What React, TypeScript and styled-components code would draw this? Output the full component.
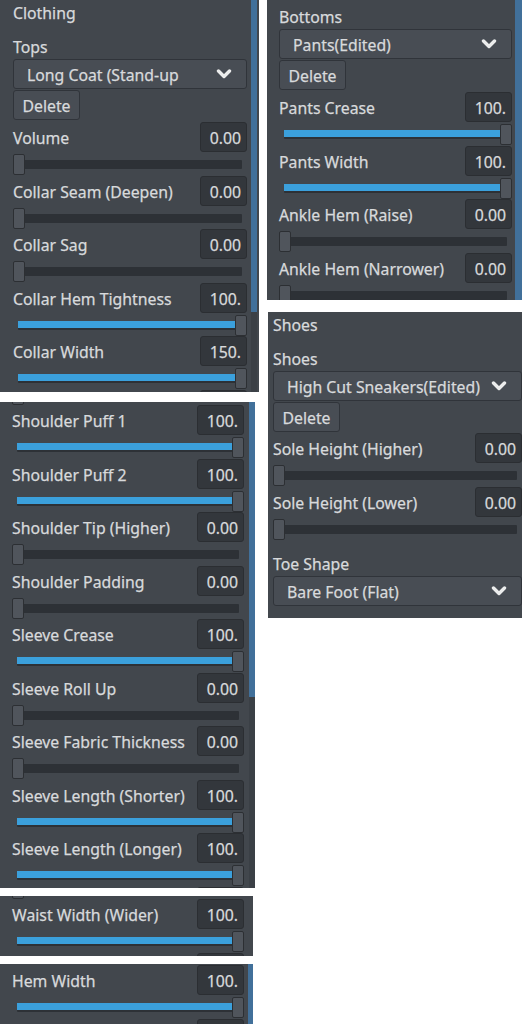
import React from 'react';
import styled, { createGlobalStyle } from 'styled-components';

const GlobalStyle = createGlobalStyle`
  html, body {
    margin: 0;
    padding: 0;
    background: #ffffff;
  }
  body {
    font-family: "Noto Sans", "DejaVu Sans", sans-serif;
    font-size: 15.8px;
    color: #d8dadc;
    -webkit-text-stroke: 0.25px #d8dadc;
  }
`;

const Collage = styled.div`
  display: flex;
  gap: 8px;
  width: 522px;
  height: 1024px;
  overflow: hidden;
`;

const Column = styled.div<{ $width: number }>`
  display: flex;
  flex-direction: column;
  width: ${({ $width }) => $width}px;
  flex: none;
`;

const Panel = styled.section<{ $w: number; $h: number; $mt?: number; $ml?: number }>`
  display: flex;
  align-items: flex-start;
  flex: none;
  width: ${({ $w }) => $w}px;
  height: ${({ $h }) => $h}px;
  margin-top: ${({ $mt }) => $mt ?? 0}px;
  margin-left: ${({ $ml }) => $ml ?? 0}px;
  background: #42474d;
  overflow: hidden;
`;

const Content = styled.div<{ $pl: number; $w: number; $mt?: number }>`
  display: flex;
  flex-direction: column;
  flex: none;
  width: ${({ $w }) => $w}px;
  margin-left: ${({ $pl }) => $pl}px;
  margin-top: ${({ $mt }) => $mt ?? 0}px;

  & > * {
    flex-shrink: 0;
  }
`;

const ScrollTrack = styled.div<{ $w: number; $mr?: number }>`
  flex: none;
  align-self: stretch;
  width: ${({ $w }) => $w}px;
  margin-left: auto;
  margin-right: ${({ $mr }) => $mr ?? 0}px;
  background: #3b4046;
`;

const ScrollThumb = styled.div<{ $h?: number }>`
  height: ${({ $h }) => ($h ? `${$h}px` : '100%')};
  background: #41709a;
`;

const SectionTitle = styled.div`
  height: 26px;
  line-height: 26px;
  white-space: nowrap;
`;

const GroupLabel = styled.div<{ $mt?: number }>`
  height: 22px;
  line-height: 22px;
  margin-top: ${({ $mt }) => $mt ?? 0}px;
  white-space: nowrap;
`;

const Select = styled.div`
  display: flex;
  align-items: center;
  justify-content: space-between;
  height: 30px;
  margin-top: 1px;
  box-sizing: border-box;
  padding: 0 14px 0 13px;
  background: #484d54;
  border: 1px solid #30343a;
  border-radius: 3px;
  white-space: nowrap;
`;

const SelectText = styled.span`
  overflow: hidden;
  padding-top: 1px;
`;

const DeleteButton = styled.div`
  display: flex;
  align-items: center;
  justify-content: center;
  align-self: flex-start;
  width: 67px;
  height: 30px;
  margin-top: 1px;
  padding-top: 1px;
  box-sizing: border-box;
  background: #484d54;
  border: 1px solid #30343a;
  border-radius: 3px;
`;

const Rows = styled.div<{ $mt?: number }>`
  display: flex;
  flex-direction: column;
  margin-top: ${({ $mt }) => $mt ?? 0}px;
`;

const Row = styled.div`
  flex: none;
  height: 53.5px;
`;

const RowHead = styled.div`
  display: flex;
  align-items: center;
  justify-content: space-between;
  height: 30px;
`;

const Label = styled.span`
  padding-top: 2px;
  white-space: nowrap;
`;

const ValueBox = styled.div`
  flex: none;
  width: 47px;
  height: 30px;
  box-sizing: border-box;
  padding: 1px 5px 0 0;
  line-height: 28px;
  text-align: right;
  background: #33373c;
  border: 1px solid #2b2e32;
  border-radius: 3px;
  overflow: hidden;
  white-space: nowrap;
`;

const Slider = styled.div`
  position: relative;
  display: flex;
  align-items: center;
  height: 21px;
  margin-top: 2px;
`;

const Track = styled.div`
  flex: 1;
  height: 9px;
  margin: 0 5px;
  background: #2d3136;
  border-radius: 1px;
`;

const Fill = styled.div<{ $full: boolean }>`
  width: ${({ $full }) => ($full ? '100%' : '0')};
  height: 7px;
  background: #3ba0dc;
`;

const Grabber = styled.div<{ $full: boolean }>`
  position: absolute;
  top: 0;
  ${({ $full }) => ($full ? 'right: 0;' : 'left: 0;')}
  width: 12px;
  height: 21px;
  box-sizing: border-box;
  background: #50555c;
  border: 1px solid #2c2f33;
  border-radius: 2px;
`;

const Chevron = () => (
  <svg width="16" height="10" viewBox="0 0 16 10">
    <polyline
      points="2.5,2 8,7.5 13.5,2"
      fill="none"
      stroke="#eceded"
      strokeWidth="3.4"
      strokeLinecap="round"
      strokeLinejoin="round"
    />
  </svg>
);

type Param = { label: string; value: string };

const SliderRow: React.FC<Param> = ({ label, value }) => {
  const full = value !== '' && value !== '0.00';
  return (
    <Row>
      <RowHead>
        <Label>{label}</Label>
        <ValueBox>{value}</ValueBox>
      </RowHead>
      <Slider>
        <Track>
          <Fill $full={full} />
        </Track>
        <Grabber $full={full} />
      </Slider>
    </Row>
  );
};

const Dropdown: React.FC<{ text: string }> = ({ text }) => (
  <Select>
    <SelectText>{text}</SelectText>
    <Chevron />
  </Select>
);

const hidden: Param = { label: '', value: '' };

const clothingRows: Param[] = [
  { label: 'Volume', value: '0.00' },
  { label: 'Collar Seam (Deepen)', value: '0.00' },
  { label: 'Collar Sag', value: '0.00' },
  { label: 'Collar Hem Tightness', value: '100.' },
  { label: 'Collar Width', value: '150.' },
  hidden,
];

const sleeveRows: Param[] = [
  hidden,
  { label: 'Shoulder Puff 1', value: '100.' },
  { label: 'Shoulder Puff 2', value: '100.' },
  { label: 'Shoulder Tip (Higher)', value: '0.00' },
  { label: 'Shoulder Padding', value: '0.00' },
  { label: 'Sleeve Crease', value: '100.' },
  { label: 'Sleeve Roll Up', value: '0.00' },
  { label: 'Sleeve Fabric Thickness', value: '0.00' },
  { label: 'Sleeve Length (Shorter)', value: '100.' },
  { label: 'Sleeve Length (Longer)', value: '100.' },
  hidden,
];

const bottomRows: Param[] = [
  { label: 'Pants Crease', value: '100.' },
  { label: 'Pants Width', value: '100.' },
  { label: 'Ankle Hem (Raise)', value: '0.00' },
  { label: 'Ankle Hem (Narrower)', value: '0.00' },
];

const shoeRows: Param[] = [
  { label: 'Sole Height (Higher)', value: '0.00' },
  { label: 'Sole Height (Lower)', value: '0.00' },
];

const renderRows = (rows: Param[]) =>
  rows.map((r, i) => <SliderRow key={i} label={r.label} value={r.value} />);

const App: React.FC = () => (
  <>
    <GlobalStyle />
    <Collage>
      <Column $width={259}>
        <Panel $w={259} $h={392}>
          <Content $pl={13} $w={234}>
            <SectionTitle>Clothing</SectionTitle>
            <GroupLabel $mt={10}>Tops</GroupLabel>
            <Dropdown text="Long Coat (Stand-up" />
            <DeleteButton>Delete</DeleteButton>
            <Rows $mt={2}>{renderRows(clothingRows)}</Rows>
          </Content>
          <ScrollTrack $w={6} $mr={2}>
            <ScrollThumb $h={312} />
          </ScrollTrack>
        </Panel>

        <Panel $w={255} $h={486} $mt={10}>
          <Content $pl={12} $w={232} $mt={-50.5}>
            <Rows>{renderRows(sleeveRows)}</Rows>
          </Content>
          <ScrollTrack $w={6}>
            <ScrollThumb $h={295} />
          </ScrollTrack>
        </Panel>

        <Panel $w={253} $h={60} $mt={8}>
          <Content $pl={12} $w={232} $mt={-50.5}>
            <Rows>{renderRows([hidden, { label: 'Waist Width (Wider)', value: '100.' }, hidden])}</Rows>
          </Content>
        </Panel>

        <Panel $w={253} $h={60} $mt={8}>
          <Content $pl={12} $w={232} $mt={1}>
            <Rows>{renderRows([{ label: 'Hem Width', value: '100.' }, hidden])}</Rows>
          </Content>
          <ScrollTrack $w={5}>
            <ScrollThumb />
          </ScrollTrack>
        </Panel>
      </Column>

      <Column $width={255}>
        <Panel $w={255} $h={300}>
          <Content $pl={12} $w={233}>
            <GroupLabel $mt={6}>Bottoms</GroupLabel>
            <Dropdown text="Pants(Edited)" />
            <DeleteButton>Delete</DeleteButton>
            <Rows $mt={2}>{renderRows(bottomRows)}</Rows>
          </Content>
          <ScrollTrack $w={7}>
            <ScrollThumb />
          </ScrollTrack>
        </Panel>

        <Panel $w={254} $h={306} $mt={12} $ml={1}>
          <Content $pl={5} $w={249}>
            <SectionTitle>Shoes</SectionTitle>
            <GroupLabel $mt={10}>Shoes</GroupLabel>
            <Dropdown text="High Cut Sneakers(Edited)" />
            <DeleteButton>Delete</DeleteButton>
            <Rows $mt={1}>{renderRows(shoeRows)}</Rows>
            <GroupLabel $mt={13}>Toe Shape</GroupLabel>
            <Dropdown text="Bare Foot (Flat)" />
          </Content>
        </Panel>
      </Column>
    </Collage>
  </>
);

export default App;
